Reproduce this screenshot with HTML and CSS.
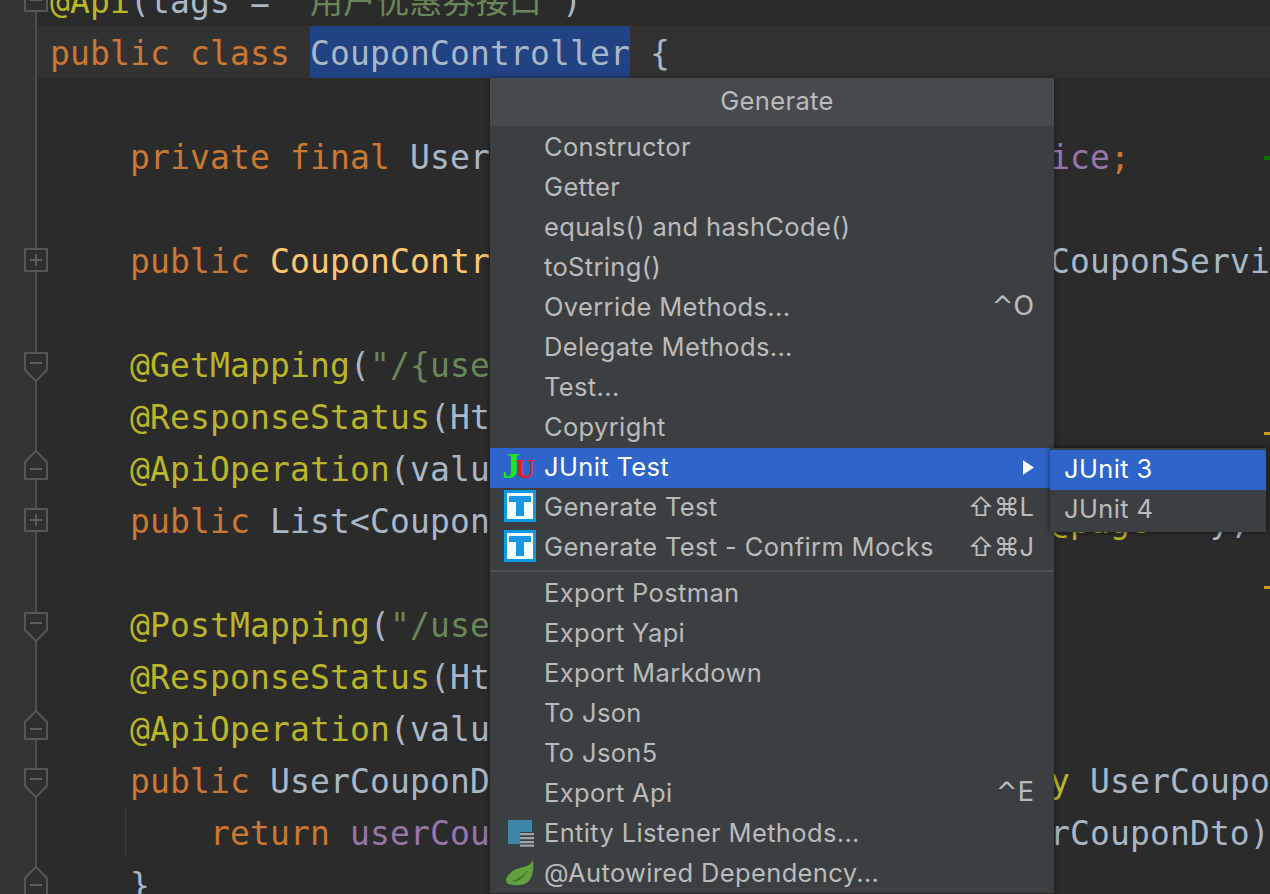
FILE: index.html
```html
<!DOCTYPE html>
<html lang="en">
<head>
<meta charset="utf-8">
<title>Generate menu</title>
<link rel="stylesheet" href="styles.css">
</head>
<body>
<div class="stage">
  <main class="editor">
    <div class="line"><div class="gutter"><svg class="fold" viewBox="0 0 24 24"><rect x="1" y="1" width="22" height="22"/><path class="mark" d="M6 12h12"/></svg></div><div class="code"><span class="an">@Api</span>(tags = <span class="st">"用户优惠券接口"</span>)</div></div>
    <div class="line current"><div class="gutter"></div><div class="code"><span class="kw">public class </span><span class="sel">CouponController</span> {</div></div>
    <div class="line"><div class="gutter"></div><div class="code"></div></div>
    <div class="line"><div class="gutter"></div><div class="code">    <span class="kw">private final </span>UserCouponService <span class="fd">userCouponService</span><span class="kw">;</span></div><span class="stripe green"></span></div>
    <div class="line"><div class="gutter"></div><div class="code"></div></div>
    <div class="line"><div class="gutter"><svg class="fold" viewBox="0 0 24 24"><rect x="1" y="1" width="22" height="22"/><path class="mark" d="M6 12h12M12 6v12"/></svg></div><div class="code">    <span class="kw">public </span><span class="mt">CouponController</span>(UserCouponService userCouponService) {</div></div>
    <div class="line"><div class="gutter"></div><div class="code"></div></div>
    <div class="line"><div class="gutter"><svg class="fold tall" viewBox="0 0 24 30"><path d="M1 1h22v17L12 29 1 18z"/><path class="mark" d="M6 11h12"/></svg></div><div class="code">    <span class="an">@GetMapping</span>(<span class="st">"/{userId}/coupons"</span>)</div></div>
    <div class="line"><div class="gutter"></div><div class="code">    <span class="an">@ResponseStatus</span>(HttpStatus.OK)</div><span class="stripe orange first"></span></div>
    <div class="line"><div class="gutter"><svg class="fold tall up" viewBox="0 0 24 30"><path d="M1 29h22V12L12 1 1 12z"/><path class="mark" d="M6 19h12"/></svg></div><div class="code">    <span class="an">@ApiOperation</span>(value = <span class="st">"coupons"</span>)</div></div>
    <div class="line"><div class="gutter"><svg class="fold" viewBox="0 0 24 24"><rect x="1" y="1" width="22" height="22"/><path class="mark" d="M6 12h12M12 6v12"/></svg></div><div class="code">    <span class="kw">public </span>List&lt;CouponDto&gt; getUserCouponsByUserId(<span class="an">@page</span>   y, Long userId) {</div></div>
    <div class="line"><div class="gutter"></div><div class="code"></div><span class="stripe orange second"></span></div>
    <div class="line"><div class="gutter"><svg class="fold tall" viewBox="0 0 24 30"><path d="M1 1h22v17L12 29 1 18z"/><path class="mark" d="M6 11h12"/></svg></div><div class="code">    <span class="an">@PostMapping</span>(<span class="st">"/users/coupons"</span>)</div></div>
    <div class="line"><div class="gutter"></div><div class="code">    <span class="an">@ResponseStatus</span>(HttpStatus.CREATED)</div></div>
    <div class="line"><div class="gutter"><svg class="fold tall up" viewBox="0 0 24 30"><path d="M1 29h22V12L12 1 1 12z"/><path class="mark" d="M6 19h12"/></svg></div><div class="code">    <span class="an">@ApiOperation</span>(value = <span class="st">"coupon"</span>)</div></div>
    <div class="line"><div class="gutter"><svg class="fold tall" viewBox="0 0 24 30"><path d="M1 1h22v17L12 29 1 18z"/><path class="mark" d="M6 11h12"/></svg></div><div class="code">    <span class="kw">public </span>UserCouponDto addUserCoupon(<span class="an">@RequestBody</span> UserCouponDto userCouponDto) {</div></div>
    <div class="line"><div class="gutter"></div><div class="code guide">        <span class="kw">return </span><span class="fd">userCouponService</span>.addUserCoupon(userCouponDto);</div></div>
    <div class="line"><div class="gutter"><svg class="fold tall up" viewBox="0 0 24 30"><path d="M1 29h22V12L12 1 1 12z"/><path class="mark" d="M6 19h12"/></svg></div><div class="code">    }</div></div>
  </main>

  <nav class="popup">
    <div class="popup-title">Generate</div>
    <ul class="menu">
      <li class="item"><span class="icon"></span><span class="label">Constructor</span></li>
      <li class="item"><span class="icon"></span><span class="label">Getter</span></li>
      <li class="item"><span class="icon"></span><span class="label">equals() and hashCode()</span></li>
      <li class="item"><span class="icon"></span><span class="label">toString()</span></li>
      <li class="item"><span class="icon"></span><span class="label">Override Methods...</span><span class="keys ctrl">^O</span></li>
      <li class="item"><span class="icon"></span><span class="label">Delegate Methods...</span></li>
      <li class="item"><span class="icon"></span><span class="label">Test...</span></li>
      <li class="item"><span class="icon"></span><span class="label">Copyright</span></li>
      <li class="item active">
        <span class="icon ju"><span class="ju-j">J</span><span class="ju-u">U</span></span><span class="label">JUnit Test</span>
        <svg class="arrow" viewBox="0 0 12 16"><path d="M0 0l12 8-12 8z"/></svg>
        <ul class="submenu">
          <li class="sub-item active">JUnit 3</li>
          <li class="sub-item">JUnit 4</li>
        </ul>
      </li>
      <li class="item"><span class="icon"><svg class="glyph" viewBox="0 0 32 32"><rect width="32" height="32" fill="#0c9be6"/><rect x="3" y="3" width="26" height="26" fill="#f4fbff"/><path d="M5 6h22v6h-7v14h-8V12H5z" fill="#1a97e2"/></svg></span><span class="label">Generate Test</span><span class="keys">⇧⌘L</span></li>
      <li class="item"><span class="icon"><svg class="glyph" viewBox="0 0 32 32"><rect width="32" height="32" fill="#0c9be6"/><rect x="3" y="3" width="26" height="26" fill="#f4fbff"/><path d="M5 6h22v6h-7v14h-8V12H5z" fill="#1a97e2"/></svg></span><span class="label">Generate Test - Confirm Mocks</span><span class="keys">⇧⌘J</span></li>
      <li class="sep"></li>
      <li class="item"><span class="icon"></span><span class="label">Export Postman</span></li>
      <li class="item"><span class="icon"></span><span class="label">Export Yapi</span></li>
      <li class="item"><span class="icon"></span><span class="label">Export Markdown</span></li>
      <li class="item"><span class="icon"></span><span class="label">To Json</span></li>
      <li class="item"><span class="icon"></span><span class="label">To Json5</span></li>
      <li class="item"><span class="icon"></span><span class="label">Export Api</span><span class="keys ctrl">^E</span></li>
      <li class="item"><span class="icon"><svg class="glyph" viewBox="0 0 32 32"><path d="M4 3h24v12H16v12H4z" fill="#3e86a8"/><path d="M16 16h14v2.300H16zM16 20h14v2.300H16zM16 24h14v2.300H16zM16 27.500h14v2.300H16z" fill="#9aa7b0"/></svg></span><span class="label">Entity Listener Methods...</span></li>
      <li class="item"><span class="icon"><svg class="glyph" viewBox="0 0 32 32"><path d="M29 3c-2 5-6 6-13 8C8 13 3 18 2 23c0 2 1 4 3 4 6 2 14 2 19-2 5-5 6-14 5-22z" fill="#63a13e"/><path d="M7 25c6-3 12-6 17-12-4 9-11 12-17 12z" fill="#41732c"/></svg></span><span class="label">@Autowired Dependency...</span></li>
    </ul>
  </nav>
</div>
</body>
</html>
```

FILE: styles.css
```css
* { box-sizing: border-box; }
html, body { margin: 0; height: 100%; }
body { background: #2b2b2b; overflow: hidden; }

.stage { position: relative; width: 1270px; height: 894px; overflow: hidden; }

.editor {
  display: flex;
  flex-direction: column;
  margin-top: -26px;
  font-family: "DejaVu Sans Mono", "Noto Sans CJK SC", monospace;
  font-size: 33px;
  letter-spacing: 0.13px;
  color: #a9b7c6;
}
.line { display: flex; height: 52px; flex: none; position: relative; }
.gutter {
  flex: none;
  width: 37px;
  background: #313335;
  border-right: 2px solid #4e4f50;
  display: flex;
  align-items: center;
  justify-content: flex-end;
}
.fold { flex: none; width: 24px; height: 24px; margin-right: -13px; position: relative; z-index: 1; }
.fold.tall { height: 30px; margin-top: 6px; }
.fold.tall.up { margin-top: -6px; }
.fold rect, .fold path { fill: #2e2f30; stroke: #555657; stroke-width: 2; }
.fold .mark { fill: none; stroke: #5c5d5e; }

.code { flex: 1; min-width: 0; padding-left: 13px; line-height: 56px; height: 52px; white-space: pre; }
.current .code { background: #323232; }
.guide { background: linear-gradient(#3a3a3a, #3a3a3a) 88px 0 / 1px 100% no-repeat; }
.kw { color: #cc7832; }
.an { color: #bbb529; }
.st { color: #6a8759; }
.fd { color: #9876aa; }
.mt { color: #ffc66d; }
.sel { display: inline-block; height: 52px; background: #214283; }

.stripe { position: absolute; right: 0; width: 6px; }
.stripe.green { top: 26px; height: 4px; background: #0b6e0b; }
.stripe.orange { height: 3px; background: #c9992a; }
.stripe.first { top: 42px; }
.stripe.second { top: 40px; }

.popup {
  position: absolute;
  left: 490px;
  top: 78px;
  width: 564px;
  background: #3c3f41;
  font-family: Inter, "Liberation Sans", sans-serif;
  font-size: 25.5px;
  letter-spacing: 0.35px;
  color: #bbbbbb;
  box-shadow: 0 0 6px rgba(0, 0, 0, 0.45);
}
.popup-title {
  height: 48px;
  padding: 0 0 4px 10px;
  background: #46494d;
  display: flex;
  align-items: center;
  justify-content: center;
  color: #bbbbbb;
}
.menu, .submenu { list-style: none; margin: 0; padding: 0; }
.menu { padding-top: 2px; }
.item { position: relative; display: flex; align-items: center; height: 40px; padding: 0 20px 4px 14px; }
.sep ~ .item { padding-bottom: 2px; }
.item.active { background: #2f65ca; color: #ffffff; }
.icon { flex: none; width: 32px; height: 32px; margin: 0 8px 0 0; display: flex; align-items: center; justify-content: center; }
.sep ~ .item .icon { margin-top: 2px; }
.glyph { width: 32px; height: 32px; display: block; }
.label { flex: 1; white-space: nowrap; }
.keys { flex: none; letter-spacing: 0; }
.keys.ctrl { font-family: "DejaVu Sans", sans-serif; font-size: 26px; }
.arrow { flex: none; width: 11px; height: 15px; margin-top: 2px; fill: #ffffff; }
.sep { height: 2px; margin: 2px 0 1px; background: #4d5052; }

.ju { font-family: "Liberation Serif", serif; font-weight: 700; font-size: 28px; letter-spacing: 0; align-items: baseline; }
.ju-j { color: #1de81d; font-size: 36px; line-height: 32px; margin-left: -3px; }
.ju-u { color: #e8201d; font-size: 27px; line-height: 32px; margin-left: -5px; }

.submenu {
  position: absolute;
  left: 560px;
  top: 0;
  width: 216px;
  padding: 2px 0;
  background: #3c3f41;
  color: #bbbbbb;
  box-shadow: 0 0 6px rgba(0, 0, 0, 0.55);
}
.sub-item { height: 40px; line-height: 38px; padding-left: 14px; }
.sub-item.active { background: #2f65ca; color: #ffffff; }
```
